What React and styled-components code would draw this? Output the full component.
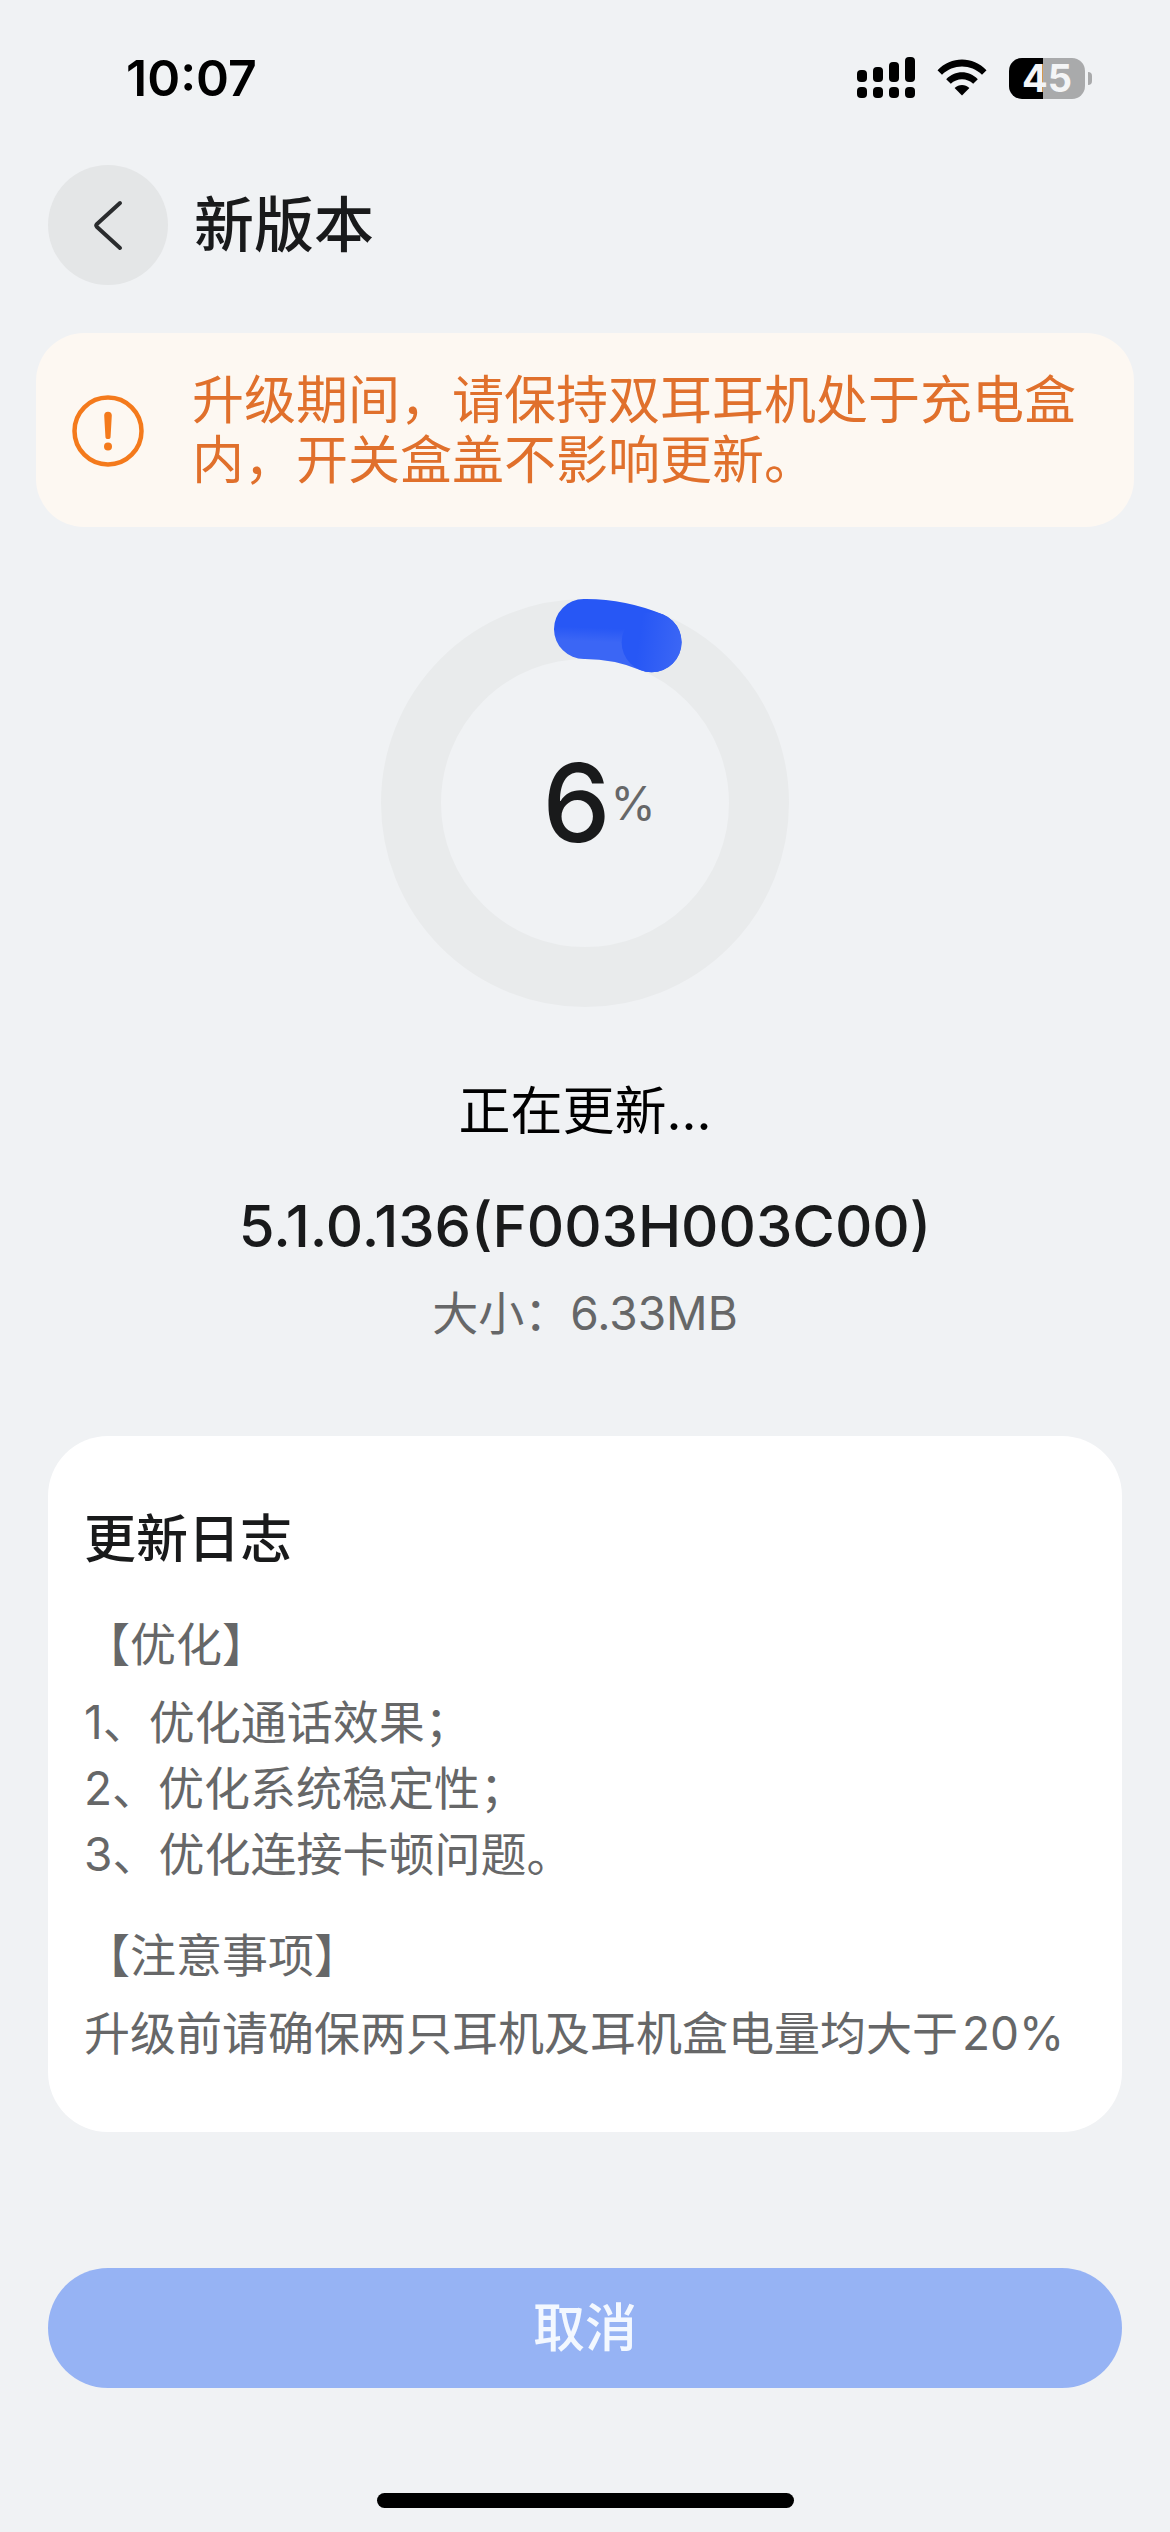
import React from 'react';
import styled, { createGlobalStyle } from 'styled-components';

const config = {
  COLORS: {
    PAGE: '#f0f2f4',
    CARD: '#ffffff',
    INK: '#191a1b',
    MUTED: '#666768',
    NOTICE: '#fdf8f2',
    NOTICE_TEXT: '#e0702c',
    NOTICE_ICON: '#f47a1c',
    TRACK: '#e9ebec',
    BLUE: '#2757f5',
    BLUE_LIGHT: '#3b66f5',
    BUTTON: '#96b3f4'
  },
  FONT: {
    S: '46px',
    M: '52px',
    L: '60px'
  }
};

const changelog = ['1、优化通话效果；', '2、优化系统稳定性；', '3、优化连接卡顿问题。'];

const RADIUS = 174;
const STROKE = 60;

const pointAt = (degrees) => {
  const angle = (degrees * Math.PI) / 180;
  return [204 + RADIUS * Math.sin(angle), 204 - RADIUS * Math.cos(angle)];
};

const SignalIcon = () => (
  <svg width="58" height="42" viewBox="0 0 58 42" aria-hidden="true">
    <rect x="0" y="13" width="10" height="12" rx="4" />
    <rect x="16" y="10" width="10" height="15" rx="4" />
    <rect x="32" y="5" width="10" height="20" rx="4" />
    <rect x="48" y="0" width="10" height="25" rx="4" />
    <rect x="0" y="30" width="10" height="11" rx="4" />
    <rect x="16" y="30" width="10" height="11" rx="4" />
    <rect x="32" y="30" width="10" height="11" rx="4" />
    <rect x="48" y="30" width="10" height="11" rx="4" />
  </svg>
);

const WifiIcon = () => (
  <svg width="50" height="38" viewBox="0 0 50 38" aria-hidden="true">
    <path d="M0.5 11.2C14 -3.2 36 -3.2 49.5 11.2L45 15.8C34 4.8 16 4.8 5 15.8Z" />
    <path d="M9.2 20.2C18 11 32 11 40.8 20.2L36.2 24.8C30 18.6 20 18.6 13.8 24.8Z" />
    <path d="M17.6 28.9C21.8 25 28.2 25 32.4 28.9L25 36.5Z" />
  </svg>
);

const BackIcon = () => (
  <svg width="60" height="60" viewBox="0 0 60 60" fill="none" aria-hidden="true">
    <path d="M42 8L19 29Q17.500 30.500 19 32L42 53" stroke="#2a2c2e" strokeWidth="4" strokeLinecap="round" strokeLinejoin="round" />
  </svg>
);

const WarningIcon = () => (
  <svg width="72" height="72" viewBox="0 0 72 72" fill="none" aria-hidden="true">
    <circle cx="36" cy="36" r="33.500" stroke={config.COLORS.NOTICE_ICON} strokeWidth="4.500" />
    <path d="M32.200 20.500a3.800 3.800 0 0 1 7.600 0l-1.200 21a2.600 2.600 0 0 1-5.200 0z" fill={config.COLORS.NOTICE_ICON} />
    <circle cx="36" cy="51.500" r="4" fill={config.COLORS.NOTICE_ICON} />
  </svg>
);

const ProgressRing = ({ percent }) => {
  const [x, y] = pointAt(percent * 3.75);

  return (
    <Ring role="progressbar" aria-label="正在更新" aria-valuenow={percent} aria-valuemin={0} aria-valuemax={100}>
      <svg width="408" height="408" viewBox="0 0 408 408" fill="none" aria-hidden="true">
        <defs>
          <linearGradient id="arc" x1="0.600" y1="0" x2="0.400" y2="1">
            <stop offset="0" stopColor={config.COLORS.BLUE} />
            <stop offset="1" stopColor={config.COLORS.BLUE_LIGHT} />
          </linearGradient>
          <linearGradient id="cap" x1="0.300" y1="0.400" x2="1" y2="0.500">
            <stop offset="0" stopColor={config.COLORS.BLUE} />
            <stop offset="1" stopColor={config.COLORS.BLUE_LIGHT} />
          </linearGradient>
        </defs>
        <circle cx="204" cy="204" r={RADIUS} stroke={config.COLORS.TRACK} strokeWidth={STROKE} />
        <path d={`M203 30A${RADIUS} ${RADIUS} 0 0 1 ${x} ${y}`} stroke="url(#arc)" strokeWidth={STROKE} strokeLinecap="round" />
        <circle cx={x} cy={y} r={STROKE / 2} fill="url(#cap)" />
      </svg>
      <RingLabel>
        <RingValue>{percent}</RingValue>
        <RingUnit>%</RingUnit>
      </RingLabel>
    </Ring>
  );
};

const App = () => (
  <Page>
    <GlobalStyle />
    <StatusBar>
      <Clock>10:07</Clock>
      <StatusIcons>
        <SignalIcon />
        <WifiIcon />
        <Battery>
          <BatteryBody>45</BatteryBody>
          <BatteryTip />
        </Battery>
      </StatusIcons>
    </StatusBar>

    <Header>
      <BackButton type="button" aria-label="返回">
        <BackIcon />
      </BackButton>
      <Title>新版本</Title>
    </Header>

    <Notice>
      <WarningIcon />
      <NoticeText>升级期间，请保持双耳耳机处于充电盒内，开关盒盖不影响更新。</NoticeText>
    </Notice>

    <Progress>
      <ProgressRing percent={6} />
      <ProgressStatus>正在更新...</ProgressStatus>
      <Version>5.1.0.136(F003H003C00)</Version>
      <Size>大小：6.33MB</Size>
    </Progress>

    <Card>
      <CardTitle>更新日志</CardTitle>
      <SectionTitle>【优化】</SectionTitle>
      <ChangeList>
        {changelog.map((line) => (
          <li key={line}>{line}</li>
        ))}
      </ChangeList>
      <SectionTitle>【注意事项】</SectionTitle>
      <CardText>升级前请确保两只耳机及耳机盒电量均大于<Amount>20%</Amount></CardText>
    </Card>

    <Footer>
      <CancelButton type="button">取消</CancelButton>
      <HomeIndicator />
    </Footer>
  </Page>
);

export default App;

const GlobalStyle = createGlobalStyle`
    * {
        box-sizing: border-box;
    }
    body {
        background: ${config.COLORS.PAGE};
        color: ${config.COLORS.INK};
        font-family: Inter, "Noto Sans CJK SC", sans-serif;
        margin: 0;
    }
    h1, h2, h3, p, ul {
        margin: 0;
        padding: 0;
    }
    button {
        border: 0;
        font-family: inherit;
        padding: 0;
    }
    svg {
        display: block;
        flex-shrink: 0;
    }
`;

const Page = styled.main`
    display: flex;
    flex-direction: column;
    min-height: 100vh;
`;

const StatusBar = styled.div`
    align-items: center;
    color: #000000;
    display: flex;
    justify-content: space-between;
    padding: 48px 78px 0 126px;
`;

const Clock = styled.time`
    font-size: 50px;
    font-weight: 600;
    line-height: 60px;
`;

const StatusIcons = styled.div`
    align-items: center;
    display: flex;
    gap: 22px;
`;

const Battery = styled.div`
    align-items: center;
    display: flex;
    gap: 3px;
`;

const BatteryBody = styled.div`
    background: linear-gradient(to right, #000000 45%, #a9aaab 45%);
    border-radius: 13px;
    color: #f4f5f6;
    font-size: 38px;
    font-weight: 700;
    line-height: 41px;
    text-align: center;
    width: 76px;
`;

const BatteryTip = styled.div`
    background: #a9aaab;
    border-radius: 0 5px 5px 0;
    height: 13px;
    width: 4px;
`;

const Header = styled.header`
    align-items: center;
    display: flex;
    gap: 26px;
    padding: 57px 48px 48px;
`;

const BackButton = styled.button`
    align-items: center;
    background: #e4e6e7;
    border-radius: 50%;
    display: flex;
    height: 120px;
    justify-content: center;
    width: 120px;
`;

const Title = styled.h1`
    font-size: ${config.FONT.L};
    font-weight: 500;
    line-height: 72px;
`;

const Notice = styled.section`
    align-items: center;
    background: ${config.COLORS.NOTICE};
    border-radius: 48px;
    display: flex;
    gap: 48px;
    margin: 0 36px;
    padding: 38px 36px 36px;
`;

const NoticeText = styled.p`
    color: ${config.COLORS.NOTICE_TEXT};
    font-size: ${config.FONT.M};
    line-height: 60px;
`;

const Progress = styled.section`
    align-items: center;
    display: flex;
    flex-direction: column;
    padding: 72px 48px 0;
    text-align: center;
`;

const Ring = styled.div`
    display: grid;
    place-items: center;

    > * {
        grid-area: 1 / 1;
    }
`;

const RingLabel = styled.div`
    align-items: center;
    display: flex;
    padding-left: 28px;
`;

const RingValue = styled.span`
    font-size: 108px;
    font-weight: 500;
    line-height: 120px;
`;

const RingUnit = styled.span`
    color: ${config.COLORS.MUTED};
    font-size: ${config.FONT.S};
    line-height: 60px;
`;

const ProgressStatus = styled.p`
    color: #000000;
    font-size: ${config.FONT.M};
    line-height: 72px;
    margin-top: 69px;
`;

const Version = styled.h2`
    font-size: 58px;
    font-weight: 500;
    line-height: 72px;
    margin-top: 42px;
`;

const Size = styled.p`
    color: ${config.COLORS.MUTED};
    font-size: ${config.FONT.S};
    line-height: 66px;
    margin-top: 18px;
`;

const Card = styled.section`
    background: ${config.COLORS.CARD};
    border-radius: 60px;
    margin: 90px 48px 0;
    padding: 68px 36px 66px;
`;

const CardTitle = styled.h2`
    font-size: ${config.FONT.M};
    font-weight: 500;
    line-height: 72px;
`;

const SectionTitle = styled.h3`
    color: ${config.COLORS.MUTED};
    font-size: ${config.FONT.S};
    font-weight: 400;
    line-height: 66px;
    margin-top: 35px;
`;

const ChangeList = styled.ul`
    color: ${config.COLORS.MUTED};
    font-size: ${config.FONT.S};
    line-height: 66px;
    list-style: none;
    margin-top: 12px;
`;

const CardText = styled.p`
    color: ${config.COLORS.MUTED};
    font-size: ${config.FONT.S};
    line-height: 66px;
    margin-top: 12px;
`;

const Amount = styled.span`
    margin-left: 4px;
`;

const Footer = styled.footer`
    align-items: center;
    display: flex;
    flex-direction: column;
    margin-top: auto;
    padding: 48px 48px 24px;
`;

const CancelButton = styled.button`
    background: ${config.COLORS.BUTTON};
    border-radius: 60px;
    color: #f3f8ff;
    font-size: ${config.FONT.M};
    font-weight: 500;
    line-height: 72px;
    padding: 25px 24px 23px;
    width: 100%;
`;

const HomeIndicator = styled.div`
    background: #000000;
    border-radius: 8px;
    height: 15px;
    margin-top: 105px;
    width: 417px;
`;
